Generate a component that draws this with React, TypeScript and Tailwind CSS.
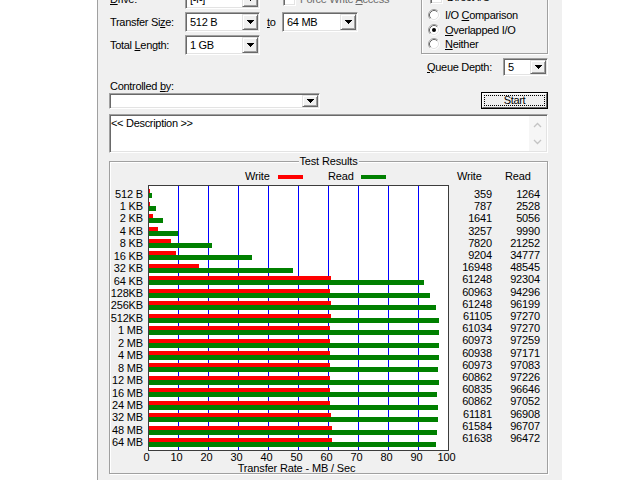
import React from 'react';

const labels = ['512 B', '1 KB', '2 KB', '4 KB', '8 KB', '16 KB', '32 KB', '64 KB', '128KB', '256KB', '512KB', '1 MB', '2 MB', '4 MB', '8 MB', '12 MB', '16 MB', '24 MB', '32 MB', '48 MB', '64 MB'];
const writes = [359, 787, 1641, 3257, 7820, 9204, 16948, 61248, 60963, 61248, 61105, 61034, 60973, 60938, 60973, 60862, 60835, 60862, 61181, 61584, 61638];
const reads = [1264, 2528, 5056, 9990, 21252, 34777, 48545, 92304, 94296, 96199, 97270, 97270, 97259, 97171, 97083, 97226, 96646, 97052, 96908, 96707, 96472];
const ticks = [0, 10, 20, 30, 40, 50, 60, 70, 80, 90, 100];

const Arrow = () => (
  <svg width="7" height="4" viewBox="0 0 7 4" shapeRendering="crispEdges">
    <path d="M0 0h7v1H0zM1 1h5v1H1zM2 2h3v1H2zM3 3h1v1H3z" fill="#000" />
  </svg>
);

const Combo = ({ value, className }: { value: string; className: string }) => (
  <div className={`flex shrink-0 bg-white border border-t-[#a0a0a0] border-l-[#a0a0a0] border-r-white border-b-white shadow-[inset_1px_1px_0_#696969,inset_-1px_-1px_0_#e3e3e3] p-[1px] ${className}`}>
    <span className="flex-1 self-center pl-[3px] leading-[13px] whitespace-nowrap overflow-hidden">{value}</span>
    <div className="w-[16px] flex items-center justify-center bg-[#f0f0f0] border border-t-[#e3e3e3] border-l-[#e3e3e3] border-r-[#696969] border-b-[#696969] shadow-[inset_1px_1px_0_#fff,inset_-1px_-1px_0_#a0a0a0]">
      <Arrow />
    </div>
  </div>
);

const Check = () => (
  <span className="inline-block w-[13px] h-[13px] shrink-0 bg-white border border-t-[#a0a0a0] border-l-[#a0a0a0] border-r-white border-b-white shadow-[inset_1px_1px_0_#696969,inset_-1px_-1px_0_#e3e3e3]" />
);

const Radio = ({ on }: { on?: boolean }) => (
  <svg width="12" height="12" viewBox="0 0 12 12" className="shrink-0">
    <circle cx="6" cy="6" r="5" fill="#fff" />
    <path d="M2.11 9.89A5.5 5.5 0 0 1 9.89 2.11" fill="none" stroke="#a0a0a0" />
    <path d="M9.89 2.11A5.5 5.5 0 0 1 2.11 9.89" fill="none" stroke="#fff" />
    <path d="M2.82 9.18A4.5 4.5 0 0 1 9.18 2.82" fill="none" stroke="#696969" />
    <path d="M9.18 2.82A4.5 4.5 0 0 1 2.82 9.18" fill="none" stroke="#e3e3e3" />
    {on && <circle cx="6" cy="6" r="2" fill="#000" />}
  </svg>
);

const Chevron = ({ up }: { up?: boolean }) => (
  <svg width="9" height="6" viewBox="0 0 9 6">
    <path d={up ? 'M1 5L4.5 1.5L8 5' : 'M1 1L4.5 4.5L8 1'} fill="none" stroke="#c4c4c4" strokeWidth="1.3" />
  </svg>
);

const Plot = () => (
  <svg width="301" height="266" viewBox="0 0 301 266" shapeRendering="crispEdges" className="shrink-0">
    <rect x="0" y="0" width="301" height="266" fill="#fff" />
    {[1, 2, 3, 4, 5, 6, 7, 8, 9].map((k) => (
      <line key={k} x1={30 * k + 0.5} x2={30 * k + 0.5} y1="1" y2="265" stroke="#0000ff" />
    ))}
    {writes.map((w, i) => {
      const y = Math.round(4.2 + 12.45 * i);
      return (
        <g key={i}>
          <rect x="1" y={y} width={Math.max(w * 0.00299 - 1, 0.6)} height="4" fill="#ff0000" />
          <rect x="1" y={y + 4} width={reads[i] * 0.00299 - 1} height="5" fill="#008000" />
        </g>
      );
    })}
    <rect x="0.5" y="0.5" width="300" height="265" fill="none" stroke="#3c3c3c" />
  </svg>
);

export default function App() {
  return (
    <div className="w-[640px] h-[480px] bg-white overflow-hidden font-['Liberation_Sans',Arial,sans-serif] text-[11px] text-black">
      <div className="ml-[97px] w-[465px] h-[480px] bg-[#f0f0f0] border-l border-[#a0a0a0] pl-[11px] pr-[14px] overflow-hidden tracking-[-0.3px]">
        {/* top controls */}
        <div className="flex justify-between h-[109px]">
          <div className="w-[248px] flex flex-col mt-[-11px]">
            <div className="flex items-center h-[20px]">
              <span className="w-[76px] shrink-0 pl-[1px]"><u>D</u>rive:</span>
              <Combo value="[-f-]" className="w-[75px] h-[20px]" />
              <div className="flex items-center shrink-0 ml-[23px] text-[#6d6d6d] whitespace-nowrap">
                <Check />
                <span className="ml-[4px]">Force Write <u>A</u>ccess</span>
              </div>
            </div>
            <div className="flex items-center h-[20px] mt-[3px]">
              <span className="w-[76px] shrink-0 pl-[1px]">Transfer Si<u>z</u>e:</span>
              <Combo value="512 B" className="w-[75px] h-[20px]" />
              <span className="w-[22px] shrink-0 pl-[7px]"><u>t</u>o</span>
              <Combo value="64 MB" className="w-[76px] h-[20px]" />
            </div>
            <div className="flex items-center h-[20px] mt-[3px]">
              <span className="w-[76px] shrink-0 pl-[1px]">Total <u>L</u>ength:</span>
              <Combo value="1 GB" className="w-[75px] h-[20px]" />
            </div>
            <div className="mt-[25px] leading-[13px] pl-[1px]">Controlled <u>b</u>y:</div>
            <Combo value="" className="w-[211px] h-[16px]" />
          </div>

          <div className="w-[127px] shrink-0 flex flex-col mt-[-3px]">
            <div className="relative h-[57px] border border-[#a0a0a0] shadow-[inset_1px_1px_0_#fff,1px_1px_0_#fff] pt-[10px]">
              <div className="absolute -top-[7px] left-[6px] px-[2px] bg-[#f0f0f0] flex items-center leading-[13px]">
                <Check />
                <span className="ml-[4px]">Direct I/O</span>
              </div>
              <div className="flex items-center h-[14.5px] pl-[6px]">
                <Radio />
                <span className="ml-[5px]">I/O <u>C</u>omparison</span>
              </div>
              <div className="flex items-center h-[14.5px] pl-[6px]">
                <Radio on />
                <span className="ml-[5px]"><u>O</u>verlapped I/O</span>
              </div>
              <div className="flex items-center h-[14.5px] pl-[6px]">
                <Radio />
                <span className="ml-[5px]"><u>N</u>either</span>
              </div>
            </div>
            <div className="flex items-center justify-between mt-[4px] h-[18px]">
              <span className="pl-[6px]"><u>Q</u>ueue Depth:</span>
              <Combo value="5" className="w-[45px] h-[18px]" />
            </div>
            <div className="self-end mt-[16px] w-[67px] h-[17px] border border-black bg-[#f0f0f0]">
              <div className="h-full border border-t-white border-l-white border-r-[#696969] border-b-[#696969] p-[1px]">
                <div className="h-full border border-dotted border-black flex items-center justify-center leading-[11px]">Start</div>
              </div>
            </div>
          </div>
        </div>

        {/* description */}
        <div className="mt-[5px] h-[39px] flex bg-white border border-t-[#a0a0a0] border-l-[#a0a0a0] border-r-white border-b-white shadow-[inset_1px_1px_0_#696969,inset_-1px_-1px_0_#e3e3e3] p-[1px]">
          <div className="flex-1 pt-[1px] leading-[13px]">&lt;&lt; Description &gt;&gt;</div>
          <div className="w-[17px] bg-[#f6f6f6] flex flex-col items-center justify-between py-[6px]">
            <Chevron up />
            <Chevron />
          </div>
        </div>

        {/* test results */}
        <div className="relative mt-[8px] h-[313px] border border-[#a0a0a0] shadow-[inset_1px_1px_0_#fff,1px_1px_0_#fff] tracking-[-0.15px]">
          <div className="absolute -top-[7px] left-1/2 -translate-x-1/2 px-[1px] bg-[#f0f0f0] leading-[13px] whitespace-nowrap">Test Results</div>

          <div className="flex items-center mt-[8px] h-[13px] whitespace-nowrap">
            <span className="w-[135px]" />
            <span className="w-[33px]">Write</span>
            <span className="w-[25px] h-[4px] bg-[#ff0000]" />
            <span className="w-[25px]" />
            <span className="w-[33px]">Read</span>
            <span className="w-[25px] h-[4px] bg-[#008000]" />
            <span className="w-[71px]" />
            <span className="w-[48px]">Write</span>
            <span>Read</span>
          </div>

          <div className="flex mt-[2px]">
            <div className="w-[33px] pt-[2.5px] text-right">
              {labels.map((l) => (
                <div key={l} className="h-[12.45px] leading-[12.45px] whitespace-nowrap">{l}</div>
              ))}
            </div>
            <div className="w-[5px]" />
            <Plot />
            <div className="w-[43px] pt-[2.9px] text-right">
              {writes.map((w, i) => (
                <div key={i} className="leading-[12.2px]">{w}</div>
              ))}
            </div>
            <div className="w-[48px] pt-[2.9px] text-right">
              {reads.map((r, i) => (
                <div key={i} className="leading-[12.2px]">{r}</div>
              ))}
            </div>
          </div>

          <div className="flex h-[12px] leading-[12px]">
            <span className="w-[21.5px] shrink-0" />
            {ticks.map((t) => (
              <span key={t} className="w-[30px] shrink-0 text-center">{t}</span>
            ))}
          </div>
          <div className="ml-[36px] w-[301px] h-[11px] leading-[11px] text-center whitespace-nowrap">Transfer Rate - MB / Sec</div>
        </div>
      </div>
    </div>
  );
}
